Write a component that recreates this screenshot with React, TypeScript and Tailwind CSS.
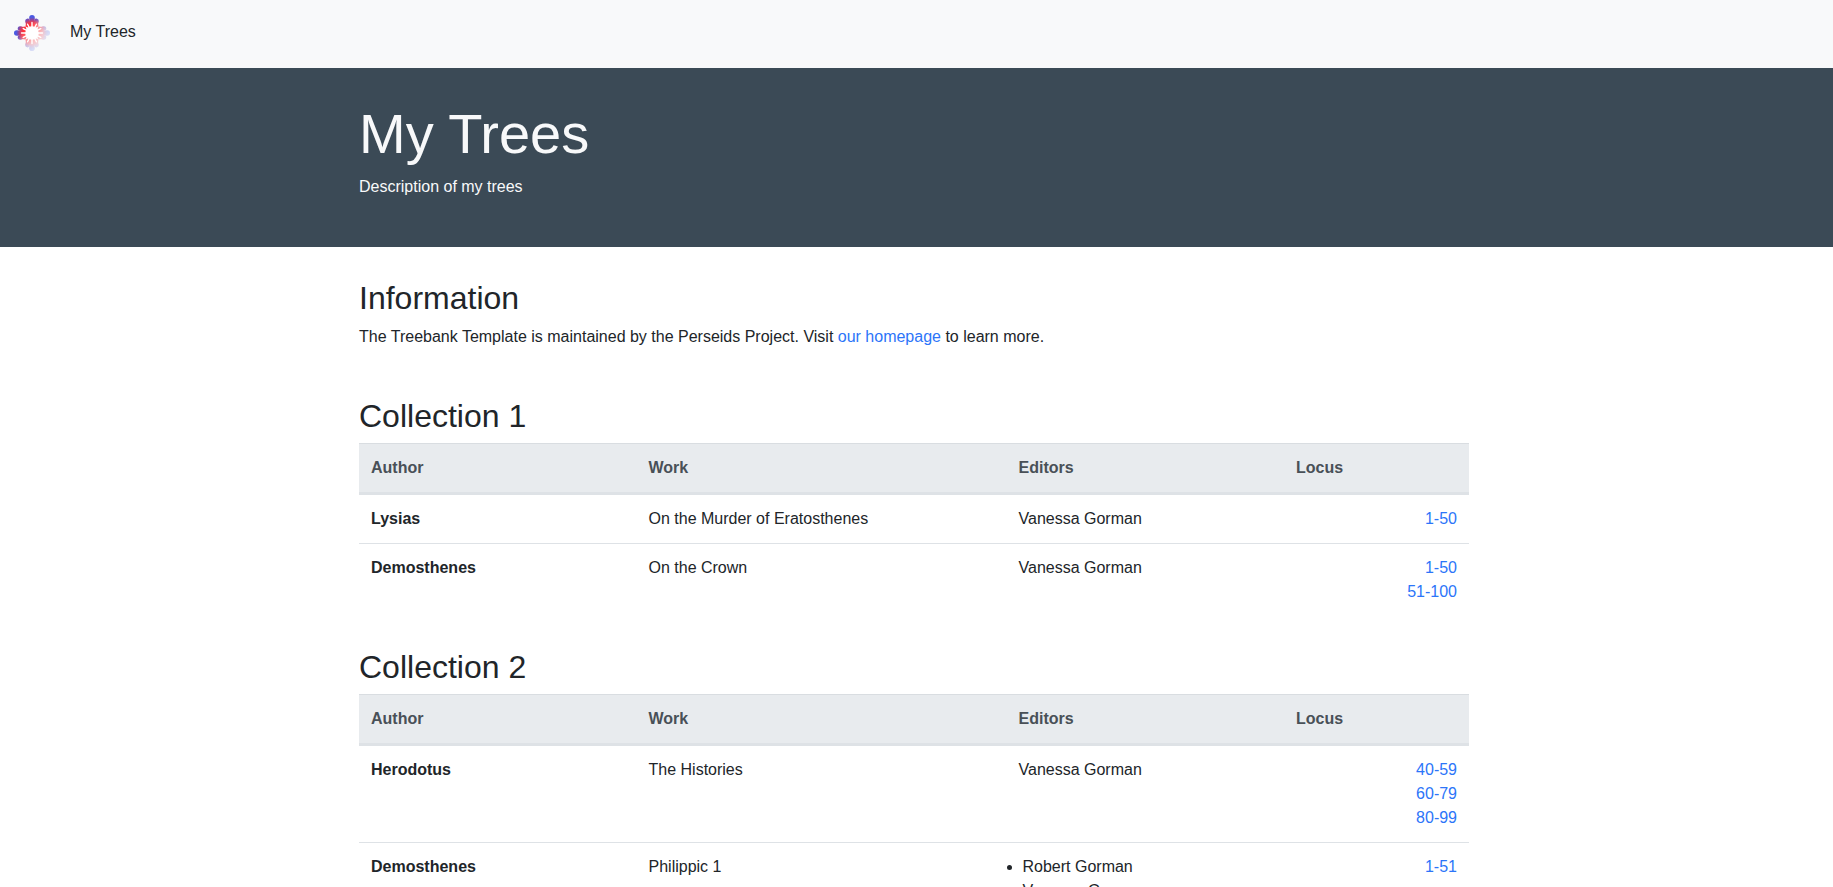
import React from 'react';

type Row = { author: string; work: string; editors: string[]; loci: string[] };

const collections: { title: string; rows: Row[] }[] = [
  {
    title: 'Collection 1',
    rows: [
      { author: 'Lysias', work: 'On the Murder of Eratosthenes', editors: ['Vanessa Gorman'], loci: ['1-50'] },
      { author: 'Demosthenes', work: 'On the Crown', editors: ['Vanessa Gorman'], loci: ['1-50', '51-100'] },
    ],
  },
  {
    title: 'Collection 2',
    rows: [
      { author: 'Herodotus', work: 'The Histories', editors: ['Vanessa Gorman'], loci: ['40-59', '60-79', '80-99'] },
      { author: 'Demosthenes', work: 'Philippic 1', editors: ['Robert Gorman', 'Vanessa Gorman'], loci: ['1-51'] },
    ],
  },
];

function Logo() {
  return (
    <svg className="h-9 w-9" viewBox="-18 -18 36 36" aria-hidden="true">
      <defs>
        <radialGradient id="petal" gradientUnits="userSpaceOnUse" cx="0" cy="0" r="18">
          <stop offset="0.5" stopColor="#ff3038" />
          <stop offset="0.62" stopColor="#e03a58" />
          <stop offset="0.75" stopColor="#8a48a0" />
          <stop offset="0.88" stopColor="#4a5ae2" />
        </radialGradient>
        <linearGradient id="fade" x1="0" y1="0" x2="1" y2="1">
          <stop offset="0.36" stopColor="#fff" />
          <stop offset="0.5" stopColor="#888" />
          <stop offset="0.64" stopColor="#444" />
          <stop offset="0.8" stopColor="#222" />
        </linearGradient>
        <mask id="fadeMask" maskUnits="userSpaceOnUse" x="-18" y="-18" width="36" height="36">
          <rect x="-18" y="-18" width="36" height="36" fill="url(#fade)" />
        </mask>
      </defs>
      <g mask="url(#fadeMask)">
        {[0, 90, 180, 270].map((angle) => (
          <g key={angle} transform={`rotate(${angle})`} fill="url(#petal)">
            <path d="M0 -5C-2 -9 -2.8 -12 -2.8 -15.2A2.8 2.8 0 0 1 2.8 -15.2C2.8 -12 2 -9 0 -5Z" />
            <path d="M-1 -6C-5 -7 -6.8 -9.5 -6.8 -12A2.3 2.3 0 0 1 -2.4 -13C-1.5 -11 -1 -8 -1 -6Z" />
            <path d="M1 -6C5 -7 6.8 -9.5 6.8 -12A2.3 2.3 0 0 0 2.4 -13C1.5 -11 1 -8 1 -6Z" />
            <path d="M-6.5 -6.5L-6 -10.5L0 -11.5L6 -10.5L6.5 -6.5L0 -4Z" />
          </g>
        ))}
      </g>
      <circle r="6.8" fill="#fff" />
      <path
        d="M0 -10.5V10.5M-10.5 0H10.5M-4.4 -8.8L4.4 8.8M4.4 -8.8L-4.4 8.8M-8.8 -4.4L8.8 4.4M-8.8 4.4L8.8 -4.4"
        stroke="#fff"
        strokeWidth="1.4"
        strokeLinecap="round"
      />
    </svg>
  );
}

function Anchor({ children }: { children: React.ReactNode }) {
  return <a href="#" className="text-[#2c75f9]">{children}</a>;
}

function CollectionTable({ title, rows }: { title: string; rows: Row[] }) {
  return (
    <section className="pt-8">
      <h2 className="mb-2 text-[32px] leading-[38px] font-medium">{title}</h2>
      <table className="w-full table-fixed border-separate border-spacing-0">
        <colgroup>
          <col className="w-[277.5px]" />
          <col className="w-[370px]" />
          <col className="w-[277.5px]" />
          <col className="w-[185px]" />
        </colgroup>
        <thead>
          <tr>
            {['Author', 'Work', 'Editors', 'Locus'].map((h) => (
              <th
                key={h}
                className="border-t border-b-3 border-t-[#d9dde1] border-b-[#dee2e6] bg-[#e8ebee] p-3 text-left font-bold text-[#495057]"
              >
                {h}
              </th>
            ))}
          </tr>
        </thead>
        <tbody className="[&>tr+tr>*]:border-t [&>tr+tr>*]:border-[#dee2e6]">
          {rows.map((r) => (
            <tr key={r.author} className="align-top">
              <th className="p-3 text-left font-bold">{r.author}</th>
              <td className="p-3">{r.work}</td>
              {r.editors.length > 1 ? (
                <td className="py-3">
                  <ul className="list-disc pl-4">
                    {r.editors.map((e) => (
                      <li key={e}>{e}</li>
                    ))}
                  </ul>
                </td>
              ) : (
                <td className="p-3">{r.editors[0]}</td>
              )}
              <td className="p-3 text-right">
                {r.loci.map((l) => (
                  <div key={l}>
                    <Anchor>{l}</Anchor>
                  </div>
                ))}
              </td>
            </tr>
          ))}
        </tbody>
      </table>
    </section>
  );
}

export default function App() {
  return (
    <div className="h-screen overflow-hidden bg-white font-['Liberation_Sans',Arial,sans-serif] text-base text-[#212529]">
      <nav className="flex h-[68px] items-start bg-[#f8f9fa] pt-[15px] pl-[14px]">
        <Logo />
        <a href="#" className="ml-5 pt-[5px] leading-6">My Trees</a>
      </nav>
      <header className="h-[179px] bg-[#3b4a56] pt-8 text-[#f8f9fa]">
        <div className="ml-[359px] w-[1110px]">
          <h1 className="mb-2 text-[56px] leading-[67.2px] font-light">My Trees</h1>
          <p>Description of my trees</p>
        </div>
      </header>
      <main className="ml-[359px] w-[1110px] pt-8">
        <section className="h-[86px]">
          <h2 className="mb-2 text-[32px] leading-[38.4px] font-medium">Information</h2>
          <p>
            The Treebank Template is maintained by the Perseids Project. Visit <Anchor>our homepage</Anchor> to learn
            more.
          </p>
        </section>
        {collections.map((c) => (
          <CollectionTable key={c.title} {...c} />
        ))}
      </main>
    </div>
  );
}
